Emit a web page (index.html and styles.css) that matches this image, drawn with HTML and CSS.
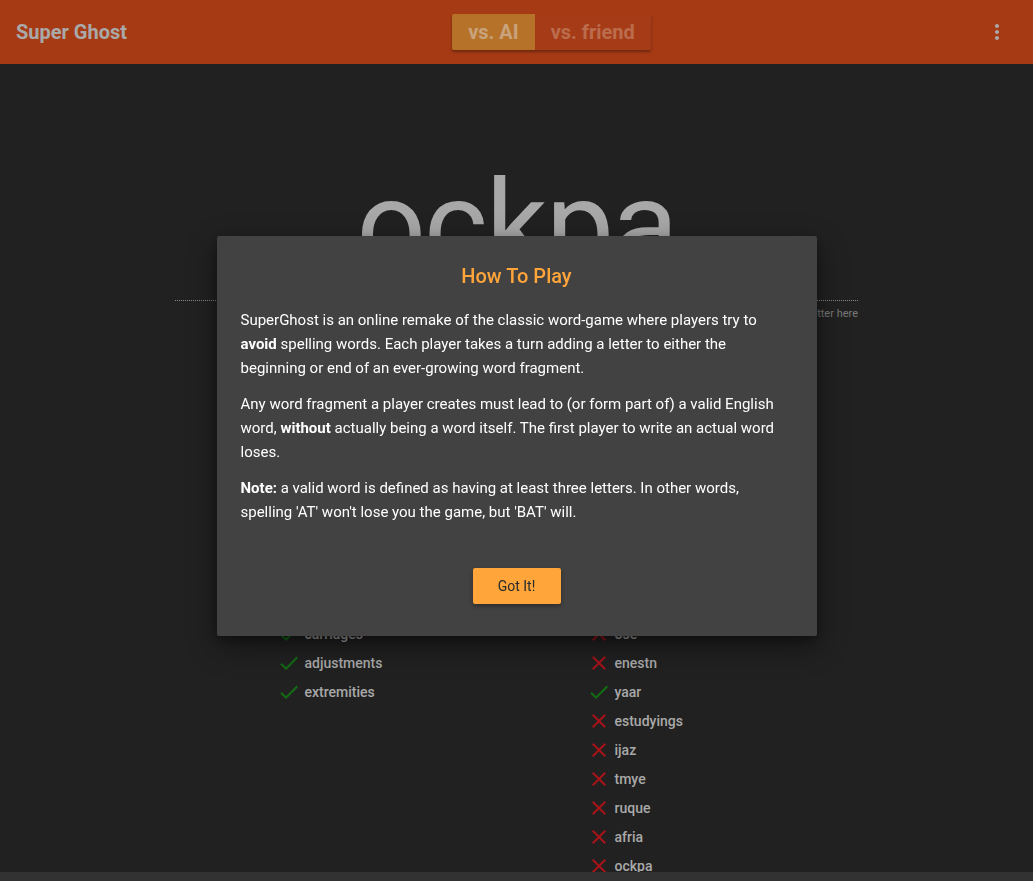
FILE: index.html
```html
<!DOCTYPE html>
<html lang="en">
<head>
<meta charset="utf-8">
<title>Super Ghost</title>
<link rel="stylesheet" href="styles.css">
</head>
<body>
<header class="topbar">
  <div class="brand">Super Ghost</div>
  <div class="mode-toggle">
    <button class="mode active">vs. AI</button>
    <button class="mode">vs. friend</button>
  </div>
  <button class="menu" aria-label="menu">
    <svg viewBox="0 0 24 24" width="24" height="24"><path fill="#a9a9a9" d="M12 8c1.1 0 2-.9 2-2s-.9-2-2-2-2 .9-2 2 .9 2 2 2zm0 2c-1.1 0-2 .9-2 2s.9 2 2 2 2-.9 2-2-.9-2-2-2zm0 6c-1.1 0-2 .9-2 2s.9 2 2 2 2-.9 2-2-.9-2-2-2z"/></svg>
  </button>
</header>

<main class="game">
  <div class="fragment">ockpa</div>
  <div class="entry">
    <div class="entry-line"></div>
    <div class="entry-hint">Type a letter here</div>
  </div>

  <div class="history">
    <ul class="words">
      <li class="ok"><span class="ic"></span>carriages</li>
      <li class="ok"><span class="ic"></span>adjustments</li>
      <li class="ok"><span class="ic"></span>extremities</li>
    </ul>
    <ul class="words">
      <li class="bad"><span class="ic"></span>ose</li>
      <li class="bad"><span class="ic"></span>enestn</li>
      <li class="ok"><span class="ic"></span>yaar</li>
      <li class="bad"><span class="ic"></span>estudyings</li>
      <li class="bad"><span class="ic"></span>ijaz</li>
      <li class="bad"><span class="ic"></span>tmye</li>
      <li class="bad"><span class="ic"></span>ruque</li>
      <li class="bad"><span class="ic"></span>afria</li>
      <li class="bad"><span class="ic"></span>ockpa</li>
    </ul>
  </div>
</main>

<div class="overlay">
  <div class="dialog">
    <h2 class="dialog-title">How To Play</h2>
    <div class="dialog-body">
      <p>SuperGhost is an online remake of the classic word-game where players try to <b>avoid</b> spelling words. Each player takes a turn adding a letter to either the beginning or end of an ever-growing word fragment.</p>
      <p>Any word fragment a player creates must lead to (or form part of) a valid English word, <b>without</b> actually being a word itself. The first player to write an actual word loses.</p>
      <p><b>Note:</b> a valid word is defined as having at least three letters. In other words, spelling 'AT' won't lose you the game, but 'BAT' will.</p>
    </div>
    <div class="dialog-actions">
      <button class="got-it">Got It!</button>
    </div>
  </div>
</div>
<div class="bottom-strip"></div>
</body>
</html>
```

FILE: styles.css
```css
* { box-sizing: border-box; }
html, body { margin: 0; padding: 0; }
body {
  background: #212121;
  font-family: Roboto, "Liberation Sans", Arial, sans-serif;
  color: #a9a9a9;
  overflow: hidden;
  height: 881px;
}

.topbar {
  height: 64px;
  background: #a63a15;
  display: flex;
  align-items: center;
  justify-content: space-between;
  padding: 0 16px;
  position: relative;
}
.brand {
  font-size: 20px;
  font-weight: 700;
  color: #a9a9a9;
  width: 200px;
}
.mode-toggle {
  display: flex;
  height: 36px;
  border-radius: 2px;
  box-shadow: 0 2px 3px rgba(0,0,0,0.35);
  overflow: hidden;
  margin-left: 70px;
}
.mode {
  border: 0;
  font-family: inherit;
  font-size: 20px;
  font-weight: 700;
  padding: 0 16px;
  background: #a63c17;
  color: #bb6c4d;
}
.mode.active {
  background: #b7722a;
  color: #c9a37c;
}
.menu {
  width: 200px;
  display: flex;
  justify-content: flex-end;
  background: none;
  border: 0;
  padding: 0 8px 0 0;
}
.menu svg { display: block; }

.game {
  display: flex;
  flex-direction: column;
  align-items: center;
}
.fragment {
  font-size: 122px;
  font-weight: 400;
  color: #a8a8a8;
  line-height: 1;
  margin-top: 101px;
  letter-spacing: -2px;
}
.entry {
  width: 683px;
  margin-top: 13px;
  display: flex;
  flex-direction: column;
  align-items: flex-end;
}
.entry-line {
  width: 100%;
  border-top: 1px dotted #8a8a8a;
}
.entry-hint {
  font-size: 11px;
  color: #7a7a7a;
  margin-top: 6px;
}

.history {
  display: grid;
  grid-template-columns: 310px 310px;
  margin-left: 140px;
  margin-top: 299px;
}
.words {
  list-style: none;
  margin: 0;
  padding: 0;
}
.words li {
  display: flex;
  align-items: center;
  height: 29px;
  font-size: 14px;
  font-weight: 500;
  color: #a9a9a9;
}
.ic {
  width: 24px;
  height: 24px;
  margin-right: 4px;
  background-repeat: no-repeat;
  background-size: 24px 24px;
}
.ok .ic {
  background-image: url("data:image/svg+xml;utf8,<svg xmlns='http://www.w3.org/2000/svg' viewBox='0 0 24 24'><path fill='%23136d13' d='M9 16.17L4.83 12l-1.42 1.41L9 19 21 7l-1.41-1.41z'/></svg>");
}
.bad .ic {
  background-image: url("data:image/svg+xml;utf8,<svg xmlns='http://www.w3.org/2000/svg' viewBox='0 0 24 24'><path fill='%23a8131a' d='M19 6.41L17.59 5 12 10.59 6.41 5 5 6.41 10.59 12 5 17.59 6.41 19 12 13.41 17.59 19 19 17.59 13.41 12z'/></svg>");
}

.overlay {
  position: fixed;
  left: 0; top: 0; right: 0; bottom: 9px;
  display: flex;
  align-items: center;
  justify-content: center;
}
.dialog {
  width: 600px;
  height: 400px;
  background: #424242;
  border-radius: 2px;
  box-shadow: 0 10px 30px rgba(0,0,0,0.45), 0 4px 10px rgba(0,0,0,0.3);
  padding: 24px 24px 32px;
  display: flex;
  flex-direction: column;
}
.dialog-title {
  margin: 0;
  text-align: center;
  font-size: 20px;
  font-weight: 500;
  line-height: 32px;
  color: #ffa53a;
}
.dialog-body {
  margin-top: 16px;
  font-size: 15px;
  line-height: 24px;
  color: #ffffff;
}
.dialog-body p { margin: 0 0 12px; }
.dialog-body b { font-weight: 700; }
.dialog-actions {
  margin-top: auto;
  display: flex;
  justify-content: center;
}
.got-it {
  width: 88px;
  height: 36px;
  border: 0;
  border-radius: 2px;
  background: #ffa53a;
  color: #2a2a2a;
  font-family: inherit;
  font-size: 14px;
  box-shadow: 0 2px 4px rgba(0,0,0,0.35);
}
.bottom-strip {
  position: fixed;
  left: 0; right: 0; bottom: 0;
  height: 9px;
  background: #323232;
}
```
